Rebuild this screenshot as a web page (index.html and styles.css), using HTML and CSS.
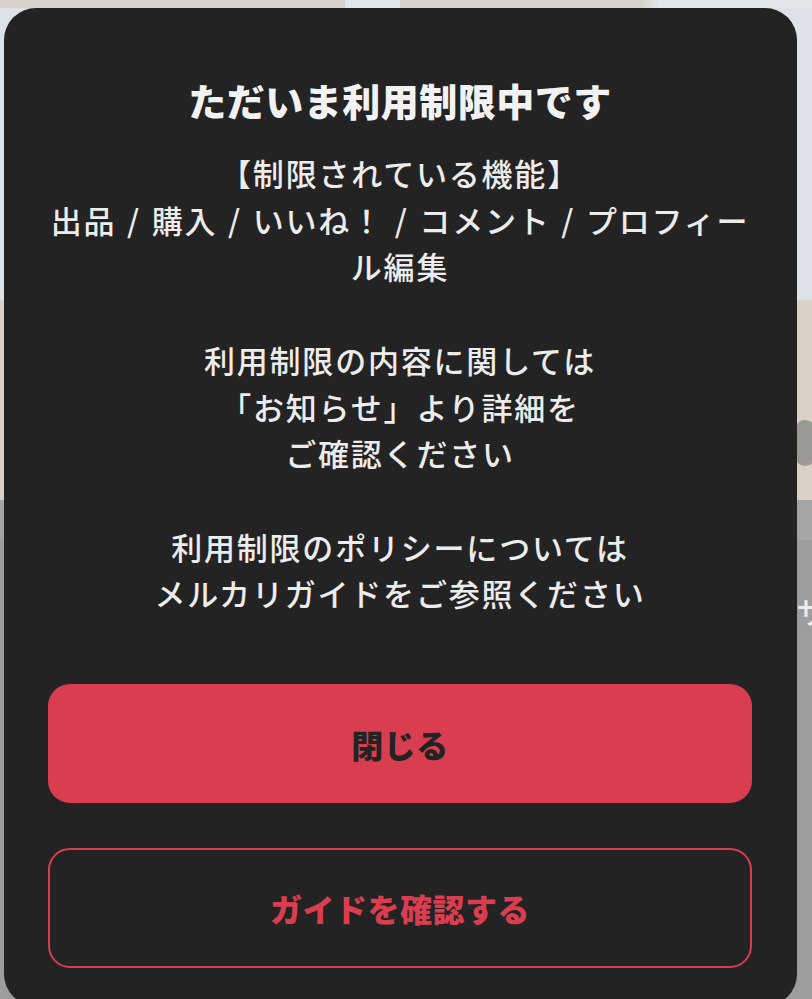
FILE: index.html
```html
<!DOCTYPE html>
<html lang="ja">
<head>
<meta charset="utf-8">
<title>ただいま利用制限中です</title>
<link rel="stylesheet" href="styles.css">
</head>
<body>
<div class="page">
  <div class="photo">
    <div class="photo-top"></div>
    <div class="photo-blob"></div>
  </div>
  <div class="below">
    <div class="below-band"></div>
    <div class="below-row"><span class="below-text">ザ</span></div>
  </div>
</div>

<div class="modal" role="dialog" aria-modal="true">
  <h1 class="modal-title">ただいま利用制限中です</h1>
  <p class="modal-body">【制限されている機能】<br>出品 / 購入 / いいね！ / コメント / プロフィー<br>ル編集<br><br>利用制限の内容に関しては<br>「お知らせ」より詳細を<br>ご確認ください<br><br>利用制限のポリシーについては<br>メルカリガイドをご参照ください</p>
  <div class="modal-actions">
    <button class="btn btn-primary" type="button">閉じる</button>
    <button class="btn btn-outline" type="button">ガイドを確認する</button>
  </div>
</div>
</body>
</html>
```

FILE: styles.css
```css
html, body {
  margin: 0;
  padding: 0;
  height: 100%;
  overflow: hidden;
}

body {
  background: #9d9d9d;
  font-family: "Noto Sans CJK JP", "Noto Sans", sans-serif;
}

/* blurred page behind the dialog */
.page {
  display: flex;
  flex-direction: column;
}

.photo {
  height: 500px;
  display: flex;
  flex-direction: column;
  background: linear-gradient(to bottom, #dde2e8 0, #dde2e8 300px, #d8d1c5 300px, #d8d1c5 500px);
}

.photo-top {
  height: 8px;
  background: linear-gradient(90deg, #d6d0c8 0, #d6d0c8 345px, #dfe6ec 345px, #dfe6ec 400px, #d6d0c8 400px, #d6d0c8 640px, #e2e6ea 660px);
}

.photo-blob {
  margin-top: 412px;
  margin-left: 795px;
  width: 20px;
  height: 46px;
  border-radius: 10px;
  background: #9b9994;
}

.below {
  display: flex;
  flex-direction: column;
}

.below-band {
  height: 40px;
  background: #a5a5a5;
}

.below-row {
  padding-top: 50px;
  padding-left: 797px;
  white-space: nowrap;
}

.below-text {
  color: #ececec;
  font-size: 30px;
  line-height: 40px;
  font-weight: 500;
}

/* dialog */
.modal {
  position: absolute;
  left: 4px;
  top: 8px;
  width: 793px;
  height: 998px;
  box-sizing: border-box;
  padding: 68px 45px 0 44px;
  background: #232323;
  border-radius: 32px;
  display: flex;
  flex-direction: column;
  align-items: stretch;
}

.modal-title {
  margin: 0;
  font-size: 38px;
  line-height: 48px;
  font-weight: 900;
  letter-spacing: 0.5px;
  color: #f2f2f2;
  text-align: center;
}

.modal-body {
  margin: 26px 0 0;
  font-size: 31px;
  line-height: 46.7px;
  font-weight: 500;
  letter-spacing: 1.8px;
  word-spacing: 2px;
  color: #ececec;
  text-align: center;
}

.modal-actions {
  margin-top: 67px;
  display: flex;
  flex-direction: column;
  gap: 45px;
}

.btn {
  height: 119px;
  border-radius: 22px;
  font-family: "Noto Sans CJK JP", "Noto Sans", sans-serif;
  font-size: 32px;
  font-weight: 900;
  letter-spacing: 0.5px;
  cursor: pointer;
}

.btn-primary {
  background: #d93e50;
  color: #232323;
  border: 0;
}

.btn-outline {
  height: 120px;
  background: transparent;
  color: #d93e50;
  border: 2px solid #d93e50;
}
```
